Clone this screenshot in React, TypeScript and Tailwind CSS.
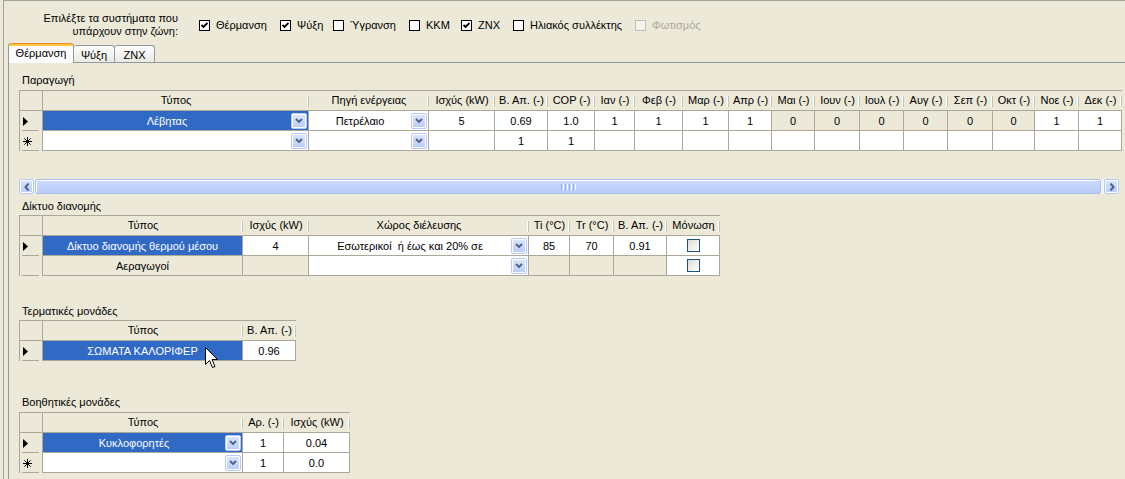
import React from 'react';

type C = { t?: string; bg?: 'w' | 'b' | 'g'; dd?: boolean; cb?: boolean; left?: boolean };
type Col = { w: string; t: string };
type Row = { head: 'arrow' | 'star' | 'none'; cells: C[] };

function Chevron() {
  return (
    <svg width="8" height="6" viewBox="0 0 8 6">
      <path d="M1 1 L4 4 L7 1" fill="none" stroke="#4D6185" strokeWidth="1.9" />
    </svg>
  );
}

function DropBtn() {
  return (
    <div className="w-[16px] h-[16px] shrink-0 mr-[1px] rounded-[2px] border border-[#B7CAF5] bg-linear-to-b from-[#DCE6FE] to-[#B9CCF8] flex items-center justify-center shadow-[inset_0_0_0_1px_#ffffff]">
      <Chevron />
    </div>
  );
}

function XPCheck() {
  return (
    <div className="w-[13px] h-[13px] border border-[#1C5180] bg-linear-to-br from-[#DCDCD7] to-[#FFFFFF]" />
  );
}

function RowHead({ kind }: { kind: 'arrow' | 'star' | 'none' | 'corner' }) {
  return (
    <div className="w-[23px] h-full shrink-0 border-r border-[#ACA899] relative flex items-center pl-[3px]">
      {kind === 'arrow' && (
        <svg width="5" height="9" viewBox="0 0 5 9">
          <path d="M0 0 L5 4.5 L0 9 Z" fill="#000" />
        </svg>
      )}
      {kind === 'star' && (
        <svg width="9" height="9" viewBox="0 0 9 9">
          <path d="M4.5 0 V9 M0 4.5 H9 M1.3 1.3 L7.7 7.7 M7.7 1.3 L1.3 7.7" stroke="#000" strokeWidth="1" />
        </svg>
      )}
      {kind !== 'corner' && <div className="absolute bottom-0 left-[2px] w-[17px] h-px bg-[#ACA899]" />}
    </div>
  );
}

function DataCell({ w, c }: { w: string; c: C }) {
  const bg = c.bg === 'b' ? 'bg-[#316AC5] text-white' : c.bg === 'g' ? 'bg-[#ECE9D8]' : 'bg-white';
  return (
    <div className={`${w} h-[20px] shrink-0 border-r border-b border-[#ACA899] ${bg} flex items-center overflow-hidden`}>
      {c.cb ? (
        <div className="flex-1 flex justify-center">
          <XPCheck />
        </div>
      ) : (
        <span className="flex-1 text-center whitespace-pre overflow-hidden pt-[1px]">{c.t}</span>
      )}
      {c.dd && <DropBtn />}
    </div>
  );
}

function Grid({ cols, rows }: { cols: Col[]; rows: Row[] }) {
  return (
    <div className="inline-flex flex-col border-l border-t border-[#ACA899] self-start">
      <div className="flex h-[20px] border-b border-[#ACA899]">
        <RowHead kind="corner" />
        {cols.map((c, i) => (
          <div key={i} className={`${c.w} shrink-0 relative flex items-center justify-center whitespace-nowrap`}>
            {c.t}
            <div className="absolute right-0 top-[5px] h-[11px] w-px bg-[#C5C2B2]" />
            <div className="absolute right-[1px] top-[5px] h-[11px] w-px bg-white" />
          </div>
        ))}
      </div>
      {rows.map((r, i) => (
        <div key={i} className="flex h-[20px]">
          <RowHead kind={r.head} />
          {r.cells.map((c, j) => (
            <DataCell key={j} w={cols[j].w} c={c} />
          ))}
        </div>
      ))}
    </div>
  );
}

function TopCheck({ w, label, checked, disabled }: { w: string; label: string; checked?: boolean; disabled?: boolean }) {
  return (
    <div className={`${w} shrink-0 flex items-center`}>
      <div
        className={`w-[11px] h-[11px] border flex items-center justify-center ${
          disabled ? 'border-[#C2BFB0] bg-[#F4F3EE]' : 'border-black bg-white'
        }`}
      >
        {checked && (
          <svg width="7" height="7" viewBox="0 0 7 7">
            <path d="M0.5 3 L2.5 5 L6.5 1" fill="none" stroke="#000" strokeWidth="1.8" />
          </svg>
        )}
      </div>
      <span className={`ml-[6px] whitespace-nowrap ${disabled ? 'text-[#ACA899]' : ''}`}>{label}</span>
    </div>
  );
}

const cols1: Col[] = [
  { w: 'w-[266px]', t: 'Τύπος' },
  { w: 'w-[120px]', t: 'Πηγή ενέργειας' },
  { w: 'w-[66px]', t: 'Ισχύς (kW)' },
  { w: 'w-[53px]', t: 'Β. Απ. (-)' },
  { w: 'w-[47px]', t: 'COP (-)' },
  { w: 'w-[40px]', t: 'Ιαν (-)' },
  { w: 'w-[48px]', t: 'Φεβ (-)' },
  { w: 'w-[46px]', t: 'Μαρ (-)' },
  { w: 'w-[43px]', t: 'Απρ (-)' },
  { w: 'w-[43px]', t: 'Μαι (-)' },
  { w: 'w-[45px]', t: 'Ιουν (-)' },
  { w: 'w-[44px]', t: 'Ιουλ (-)' },
  { w: 'w-[44px]', t: 'Αυγ (-)' },
  { w: 'w-[45px]', t: 'Σεπ (-)' },
  { w: 'w-[42px]', t: 'Οκτ (-)' },
  { w: 'w-[44px]', t: 'Νοε (-)' },
  { w: 'w-[43px]', t: 'Δεκ (-)' },
];

const rows1: Row[] = [
  {
    head: 'arrow',
    cells: [
      { t: 'Λέβητας', bg: 'b', dd: true },
      { t: 'Πετρέλαιο', dd: true },
      { t: '5' },
      { t: '0.69' },
      { t: '1.0' },
      { t: '1' },
      { t: '1' },
      { t: '1' },
      { t: '1' },
      { t: '0', bg: 'g' },
      { t: '0', bg: 'g' },
      { t: '0', bg: 'g' },
      { t: '0', bg: 'g' },
      { t: '0', bg: 'g' },
      { t: '0', bg: 'g' },
      { t: '1' },
      { t: '1' },
    ],
  },
  {
    head: 'star',
    cells: [
      { dd: true },
      { dd: true },
      {},
      { t: '1' },
      { t: '1' },
      {},
      {},
      {},
      {},
      {},
      {},
      {},
      {},
      {},
      {},
      {},
      {},
    ],
  },
];

const cols2: Col[] = [
  { w: 'w-[200px]', t: 'Τύπος' },
  { w: 'w-[66px]', t: 'Ισχύς (kW)' },
  { w: 'w-[220px]', t: 'Χώρος διέλευσης' },
  { w: 'w-[41px]', t: 'Ti (°C)' },
  { w: 'w-[44px]', t: 'Tr (°C)' },
  { w: 'w-[53px]', t: 'Β. Απ. (-)' },
  { w: 'w-[53px]', t: 'Μόνωση' },
];

const rows2: Row[] = [
  {
    head: 'arrow',
    cells: [
      { t: 'Δίκτυο διανομής θερμού μέσου', bg: 'b' },
      { t: '4' },
      { t: 'Εσωτερικοί  ή έως και 20% σε', dd: true },
      { t: '85' },
      { t: '70' },
      { t: '0.91' },
      { cb: true },
    ],
  },
  {
    head: 'none',
    cells: [
      { t: 'Αεραγωγοί', bg: 'g' },
      { bg: 'g' },
      { dd: true },
      { bg: 'g' },
      { bg: 'g' },
      { bg: 'g' },
      { cb: true },
    ],
  },
];

const cols3: Col[] = [
  { w: 'w-[200px]', t: 'Τύπος' },
  { w: 'w-[53px]', t: 'Β. Απ. (-)' },
];

const rows3: Row[] = [
  {
    head: 'arrow',
    cells: [{ t: 'ΣΩΜΑΤΑ ΚΑΛΟΡΙΦΕΡ', bg: 'b' }, { t: '0.96' }],
  },
];

const cols4: Col[] = [
  { w: 'w-[200px]', t: 'Τύπος' },
  { w: 'w-[41px]', t: 'Αρ. (-)' },
  { w: 'w-[66px]', t: 'Ισχύς (kW)' },
];

const rows4: Row[] = [
  {
    head: 'arrow',
    cells: [{ t: 'Κυκλοφορητές', bg: 'b', dd: true }, { t: '1' }, { t: '0.04' }],
  },
  {
    head: 'star',
    cells: [{ dd: true }, { t: '1' }, { t: '0.0' }],
  },
];

function ScrollBtn({ dir }: { dir: 'l' | 'r' }) {
  return (
    <div className="w-[15px] h-[15px] shrink-0 rounded-[2px] border border-[#B4C7F2] bg-linear-to-b from-[#D9E4FE] to-[#BACDF8] shadow-[inset_0_0_0_1px_#ffffff] flex items-center justify-center">
      <svg width="6" height="8" viewBox="0 0 6 8">
        <path d={dir === 'l' ? 'M4.5 0.5 L1.5 4 L4.5 7.5' : 'M1.5 0.5 L4.5 4 L1.5 7.5'} fill="none" stroke="#4D6185" strokeWidth="2" />
      </svg>
    </div>
  );
}

function HScroll() {
  return (
    <div className="w-[1100px] h-[15px] flex bg-[#F5F4EF]">
      <ScrollBtn dir="l" />
      <div className="flex-1 flex items-stretch pl-[1px] pr-[3px]">
        <div className="flex-1 rounded-[2px] border border-[#A9BEEF] bg-linear-to-b from-[#CCDAFD] to-[#B9CDF9] shadow-[inset_0_1px_0_#ffffff,inset_1px_0_0_#ffffff] flex items-center justify-center">
          <div className="flex gap-[1px] h-[6px]">
            <div className="w-px bg-[#8DAEF0]" />
            <div className="w-px bg-white" />
            <div className="w-px bg-[#8DAEF0]" />
            <div className="w-px bg-white" />
            <div className="w-px bg-[#8DAEF0]" />
            <div className="w-px bg-white" />
            <div className="w-px bg-[#8DAEF0]" />
            <div className="w-px bg-white" />
          </div>
        </div>
      </div>
      <ScrollBtn dir="r" />
    </div>
  );
}

export default function App() {
  return (
    <div className="w-[1125px] h-[479px] bg-[#ECE9D8] overflow-hidden relative text-[11px] leading-[13px] text-black font-['Liberation_Sans',Arial,sans-serif]">
      <div className="ml-[3px] h-full border-l border-t border-[#A5A297] flex flex-col">
        {/* header with system checkboxes */}
        <div className="h-[42px] pt-[6px] flex items-center shrink-0">
          <div className="w-[174px] text-right leading-[13px]">
            Επιλέξτε τα συστήματα που
            <br />
            υπάρχουν στην ζώνη:
          </div>
          <div className="ml-[21px] flex items-center">
            <TopCheck w="w-[81px]" label="Θέρμανση" checked />
            <TopCheck w="w-[53px]" label="Ψύξη" checked />
            <TopCheck w="w-[76px]" label="Ύγρανση" />
            <TopCheck w="w-[52px]" label="ΚΚΜ" />
            <TopCheck w="w-[52px]" label="ZNX" checked />
            <TopCheck w="w-[122px]" label="Ηλιακός συλλέκτης" />
            <TopCheck w="w-[80px]" label="Φωτισμός" disabled />
          </div>
        </div>

        {/* tabs */}
        <div className="h-[20px] pl-[4px] flex items-end shrink-0">
          <div className="relative z-10 w-[66px] h-[20px] rounded-t-[3px] border-x border-[#919B9C] bg-[#FCFCFE] flex flex-col">
            <div className="h-[3px] bg-[#FFC83C] border-t border-[#E68B2C] rounded-t-[3px]" />
            <div className="flex-1 flex items-center justify-center pb-[2px]">Θέρμανση</div>
          </div>
          <div className="w-[41px] h-[18px] rounded-t-[3px] border-t border-r border-[#919B9C] bg-linear-to-b from-[#FEFEFE] to-[#E9E8E1] flex items-center justify-center pt-[1px]">
            Ψύξη
          </div>
          <div className="w-[40px] h-[18px] rounded-t-[3px] border-t border-r border-[#919B9C] bg-linear-to-b from-[#FEFEFE] to-[#E9E8E1] flex items-center justify-center pt-[1px]">
            ZNX
          </div>
        </div>

        {/* tab page */}
        <div className="-mt-px ml-[4px] flex-1 border-l border-t border-[#919B9C] pl-[10px] flex flex-col">
          <div className="mt-[11px] pl-[3px]">Παραγωγή</div>
          <div className="mt-[3px] flex">
            <Grid cols={cols1} rows={rows1} />
          </div>
          <div className="mt-[28px]">
            <HScroll />
          </div>

          <div className="mt-[6px] pl-[3px]">Δίκτυο διανομής</div>
          <div className="mt-[2px] flex">
            <Grid cols={cols2} rows={rows2} />
          </div>

          <div className="mt-[29px] pl-[3px]">Τερματικές μονάδες</div>
          <div className="mt-[2px] flex">
            <Grid cols={cols3} rows={rows3} />
          </div>

          <div className="mt-[35px] pl-[3px]">Βοηθητικές μονάδες</div>
          <div className="mt-[3px] flex">
            <Grid cols={cols4} rows={rows4} />
          </div>
        </div>
      </div>

      {/* mouse pointer */}
      <svg className="absolute left-[205px] top-[347px]" width="14" height="22" viewBox="0 0 14 22">
        <path
          d="M0.5 0.5 L0.5 17.5 L4.5 13.5 L7.5 20.5 L10 19.5 L7 12.5 L12.5 12.5 Z"
          fill="#ffffff"
          stroke="#000000"
          strokeWidth="1"
        />
      </svg>
    </div>
  );
}
